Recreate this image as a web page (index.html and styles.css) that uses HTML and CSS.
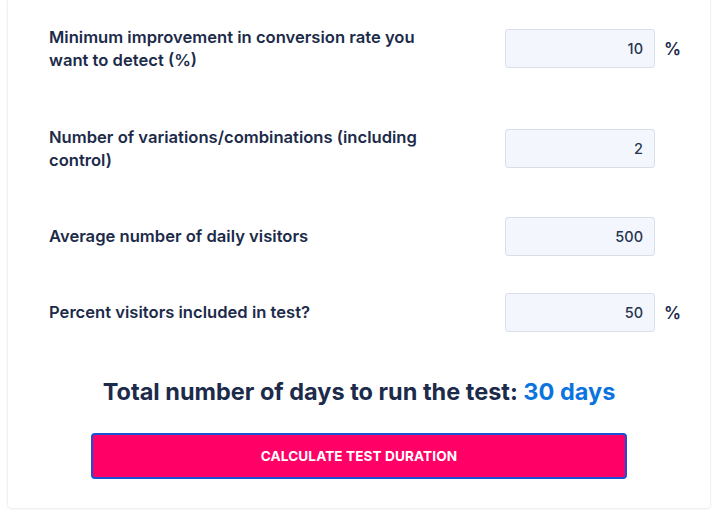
FILE: index.html
```html
<!DOCTYPE html>
<html lang="en">
<head>
<meta charset="utf-8">
<title>Test Duration Calculator</title>
<link rel="stylesheet" href="styles.css">
</head>
<body>
<div class="card">
  <div class="form">
    <label class="label" for="mde">Minimum improvement in conversion rate you want to detect (%)</label>
    <input class="field" id="mde" type="text" value="10">
    <span class="unit">%</span>

    <label class="label" for="vars">Number of variations/combinations (including control)</label>
    <input class="field" id="vars" type="text" value="2">
    <span class="unit"></span>

    <label class="label" for="visitors">Average number of daily visitors</label>
    <input class="field" id="visitors" type="text" value="500">
    <span class="unit"></span>

    <label class="label" for="pct">Percent visitors included in test?</label>
    <input class="field" id="pct" type="text" value="50">
    <span class="unit">%</span>
  </div>

  <h2 class="result">Total number of days to run the test: <span class="result-value">30 days</span></h2>

  <button class="btn" type="button">CALCULATE TEST DURATION</button>
</div>
</body>
</html>
```

FILE: styles.css
```css
* { box-sizing: border-box; }

html, body {
  margin: 0;
  padding: 0;
  background: #ffffff;
  font-family: Inter, "Noto Sans", "Liberation Sans", sans-serif;
  color: #1c2b4a;
}

body {
  height: 510px;
  overflow: hidden;
}

.card {
  margin: 0 14px 0 8px;
  height: 508px;
  background: #fff;
  border-radius: 0 0 4px 4px;
  box-shadow: 0 0 0 1px #eef0f3, 0 1px 4px rgba(20, 30, 50, 0.06);
  padding: 0 41px;
  display: flex;
  flex-direction: column;
}

.form {
  margin-right: -21px;
  display: grid;
  grid-template-columns: 1fr 150px 35px;
  grid-template-rows: 97px 103px 73px 79px;
  align-items: center;
}

.label {
  font-size: 16.6px;
  font-weight: 600;
  line-height: 23px;
  color: #1c2b4a;
  padding-right: 60px;
}

.field {
  width: 150px;
  height: 39px;
  background: #f3f7fd;
  border: 1px solid #d8dfe8;
  border-radius: 3px;
  text-align: right;
  padding: 0 11px 0 8px;
  font-family: inherit;
  font-size: 14.5px;
  font-weight: 500;
  color: #27354f;
  outline: none;
}

.unit {
  padding-left: 9px;
  font-size: 17px;
  font-weight: 600;
  color: #1c2b4a;
}

.result {
  margin: 25px 0 0;
  text-align: center;
  font-size: 23.5px;
  font-weight: 700;
  line-height: 30px;
  color: #1c2b4a;
}

.result-value {
  color: #0b74de;
}

.btn {
  margin: 26px auto 0;
  width: 536px;
  height: 46px;
  background: #ff0066;
  border: 2px solid #1a52d6;
  border-radius: 4px;
  color: #fff;
  font-family: inherit;
  font-size: 13.6px;
  font-weight: 700;
  letter-spacing: 0.1px;
  cursor: pointer;
}
```
